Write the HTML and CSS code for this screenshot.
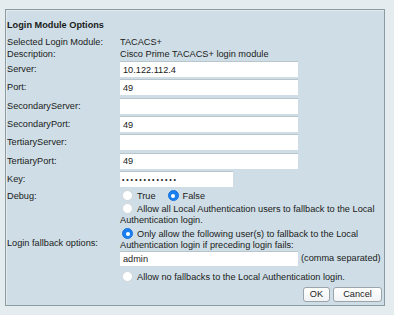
FILE: index.html
```html
<!DOCTYPE html>
<html>
<head>
<meta charset="utf-8">
<link rel="stylesheet" href="styles.css">
</head>
<body>
<div class="frame">
  <div class="form">
    <div class="title">Login Module Options</div>

    <div class="lbl txt">Selected Login Module:</div>
    <div class="val txt">TACACS+</div>

    <div class="lbl txt">Description:</div>
    <div class="val txt">Cisco Prime TACACS+ login module</div>

    <div class="lbl inrow">Server:</div>
    <div class="val inrow"><input class="field" type="text" value="10.122.112.4"></div>

    <div class="lbl inrow">Port:</div>
    <div class="val inrow"><input class="field" type="text" value="49"></div>

    <div class="lbl inrow">SecondaryServer:</div>
    <div class="val inrow"><input class="field" type="text" value=""></div>

    <div class="lbl inrow">SecondaryPort:</div>
    <div class="val inrow"><input class="field" type="text" value="49"></div>

    <div class="lbl inrow">TertiaryServer:</div>
    <div class="val inrow"><input class="field" type="text" value=""></div>

    <div class="lbl inrow">TertiaryPort:</div>
    <div class="val inrow"><input class="field" type="text" value="49"></div>

    <div class="lbl inrow">Key:</div>
    <div class="val inrow"><input class="field key" type="password" value="1234567890123"></div>

    <div class="lbl debug">Debug:</div>
    <div class="val debug">
      <span class="opt"><span class="radio"></span>True</span>
      <span class="opt"><span class="radio on"></span>False</span>
    </div>

    <div class="lbl fallback-lbl">Login fallback options:</div>
    <div class="val fallback">
      <div class="choice"><span class="radio"></span>Allow all Local Authentication users to fallback to the Local Authentication login.</div>
      <div class="choice gap"><span class="radio on"></span>Only allow the following user(s) to fallback to the Local Authentication login if preceding login fails:</div>
      <div class="users"><input class="field admin" type="text" value="admin"><span class="hint">(comma separated)</span></div>
      <div class="choice gap2"><span class="radio"></span>Allow no fallbacks to the Local Authentication login.</div>
    </div>

    <div class="buttons">
      <button class="btn ok">OK</button>
      <button class="btn cancel">Cancel</button>
    </div>
  </div>
</div>
</body>
</html>
```
FILE: styles.css
```css
html, body {
  margin: 0;
  padding: 0;
}
body {
  background: #e4ecf0;
  font-family: "Liberation Sans", Arial, Helvetica, sans-serif;
  font-size: 9.2px;
  color: #1a1a1a;
  width: 394px;
  height: 315px;
  overflow: hidden;
}
.frame {
  margin: 9px 9px 0 5px;
  border: 1px solid #8c9aa1;
  box-shadow: inset 1px 1px 0 #e2eaee;
  background: #cfdee6;
  padding: 8px 2px 3px 1px;
  height: 284px;
}
.form {
  display: grid;
  grid-template-columns: 113px 1fr;
  grid-template-rows: 18px 12px 12px repeat(7, 18.33px) 14.7px 77px 22px;
}
.title {
  grid-column: 1 / 3;
  font-weight: bold;
  line-height: 12px;
  align-self: start;
  padding-top: 1px;
}
.txt {
  line-height: 12px;
}
.form > .lbl:nth-child(2),
.form > .val:nth-child(3) {
  align-self: end;
}
.inrow, .debug {
  display: flex;
  align-items: center;
}
.field {
  box-sizing: border-box;
  width: 178px;
  height: 16px;
  margin: 0;
  padding: 0 3px;
  border: none;
  border-top: 1px solid #b8c5cb;
  background: #ffffff;
  font-family: inherit;
  font-size: 9.2px;
  color: #1a1a1a;
  outline: none;
}
.key {
  width: 113px;
  font-size: 7px;
  letter-spacing: 1.85px;
  padding-left: 2px;
}
.opt {
  display: inline-flex;
  align-items: center;
  margin-right: 10px;
}
.radio {
  display: inline-block;
  box-sizing: border-box;
  width: 11px;
  height: 11px;
  border-radius: 50%;
  background: #ffffff;
  border: 1px solid #d0d7db;
  margin: 0 4px 0 2px;
  vertical-align: -2px;
  position: relative;
}
.radio.on {
  background: #1a7ff1;
  border-color: #1672db;
}
.radio.on::after {
  content: "";
  position: absolute;
  left: 2.5px;
  top: 2.5px;
  width: 4px;
  height: 4px;
  border-radius: 50%;
  background: #ffffff;
}
.fallback-lbl {
  align-self: center;
  padding-top: 3px;
}
.fallback {
  line-height: 11px;
}
.choice.gap {
  margin-top: 2.5px;
}
.users {
  display: flex;
  align-items: center;
  height: 15px;
}
.admin {
  height: 15px;
}
.hint {
  margin-left: 3px;
}
.choice.gap2 {
  margin-top: 4.5px;
}
.buttons {
  grid-column: 1 / 3;
  display: flex;
  justify-content: flex-end;
  align-items: flex-end;
  gap: 3px;
}
.btn {
  box-sizing: border-box;
  height: 15px;
  padding: 0;
  margin: 0;
  border: 1px solid #9aa4a9;
  border-radius: 3px;
  background: linear-gradient(#ffffff, #f1f3f4);
  font-family: inherit;
  font-size: 9.2px;
  color: #1a1a1a;
  line-height: 13px;
}
.ok {
  width: 27px;
}
.cancel {
  width: 49px;
}
```
